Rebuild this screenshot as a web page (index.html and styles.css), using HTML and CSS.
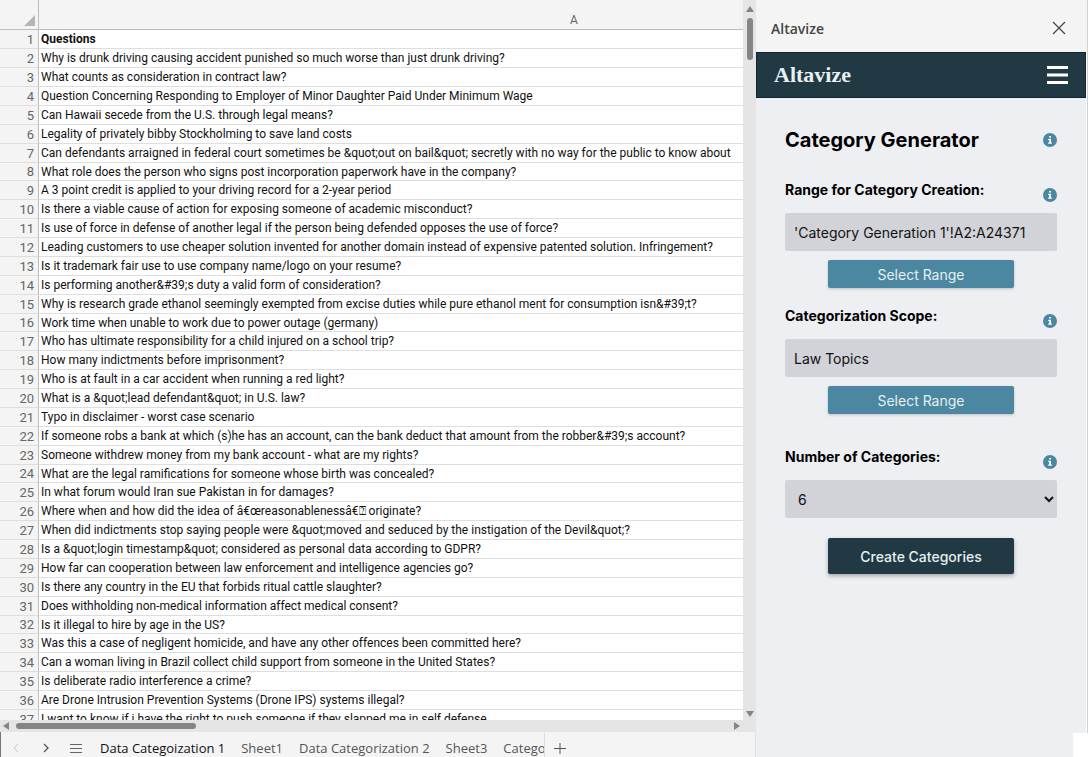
FILE: index.html
```html
<!DOCTYPE html>
<html lang="en">
<head>
  <title>Altavize - Category Generator</title>
  <meta charset="utf-8">
  <link rel="stylesheet" href="styles.css">
</head>
<body>

  <main id="workbook">
    <div id="sheet">
      <div id="grid">
        <table>
          <colgroup><col class="numbers"><col class="questions"></colgroup>
          <thead>
            <tr><th class="corner"><svg width="11" height="11" viewBox="0 0 11 11"><path d="M11 0V11H0Z" fill="#b5b5b5"/></svg></th><th>A</th></tr>
          </thead>
          <tbody>
            <tr><th>1</th><td><strong>Questions</strong></td></tr>
            <tr><th>2</th><td>Why is drunk driving causing accident punished so much worse than just drunk driving?</td></tr>
            <tr><th>3</th><td>What counts as consideration in contract law?</td></tr>
            <tr><th>4</th><td>Question Concerning Responding to Employer of Minor Daughter Paid Under Minimum Wage</td></tr>
            <tr><th>5</th><td>Can Hawaii secede from the U.S. through legal means?</td></tr>
            <tr><th>6</th><td>Legality of privately bibby Stockholming to save land costs</td></tr>
            <tr><th>7</th><td>Can defendants arraigned in federal court sometimes be &amp;quot;out on bail&amp;quot; secretly with no way for the public to know about</td></tr>
            <tr><th>8</th><td>What role does the person who signs post incorporation paperwork have in the company?</td></tr>
            <tr><th>9</th><td>A 3 point credit is applied to your driving record for a 2-year period</td></tr>
            <tr><th>10</th><td>Is there a viable cause of action for exposing someone of academic misconduct?</td></tr>
            <tr><th>11</th><td>Is use of force in defense of another legal if the person being defended opposes the use of force?</td></tr>
            <tr><th>12</th><td>Leading customers to use cheaper solution invented for another domain instead of expensive patented solution. Infringement?</td></tr>
            <tr><th>13</th><td>Is it trademark fair use to use company name/logo on your resume?</td></tr>
            <tr><th>14</th><td>Is performing another&amp;#39;s duty a valid form of consideration?</td></tr>
            <tr><th>15</th><td>Why is research grade ethanol seemingly exempted from excise duties while pure ethanol ment for consumption isn&amp;#39;t?</td></tr>
            <tr><th>16</th><td>Work time when unable to work due to power outage (germany)</td></tr>
            <tr><th>17</th><td>Who has ultimate responsibility for a child injured on a school trip?</td></tr>
            <tr><th>18</th><td>How many indictments before imprisonment?</td></tr>
            <tr><th>19</th><td>Who is at fault in a car accident when running a red light?</td></tr>
            <tr><th>20</th><td>What is a &amp;quot;lead defendant&amp;quot; in U.S. law?</td></tr>
            <tr><th>21</th><td>Typo in disclaimer - worst case scenario</td></tr>
            <tr><th>22</th><td>If someone robs a bank at which (s)he has an account, can the bank deduct that amount from the robber&amp;#39;s account?</td></tr>
            <tr><th>23</th><td>Someone withdrew money from my bank account - what are my rights?</td></tr>
            <tr><th>24</th><td>What are the legal ramifications for someone whose birth was concealed?</td></tr>
            <tr><th>25</th><td>In what forum would Iran sue Pakistan in for damages?</td></tr>
            <tr><th>26</th><td>Where when and how did the idea of â€œreasonablenessâ€⍰ originate?</td></tr>
            <tr><th>27</th><td>When did indictments stop saying people were &amp;quot;moved and seduced by the instigation of the Devil&amp;quot;?</td></tr>
            <tr><th>28</th><td>Is a &amp;quot;login timestamp&amp;quot; considered as personal data according to GDPR?</td></tr>
            <tr><th>29</th><td>How far can cooperation between law enforcement and intelligence agencies go?</td></tr>
            <tr><th>30</th><td>Is there any country in the EU that forbids ritual cattle slaughter?</td></tr>
            <tr><th>31</th><td>Does withholding non-medical information affect medical consent?</td></tr>
            <tr><th>32</th><td>Is it illegal to hire by age in the US?</td></tr>
            <tr><th>33</th><td>Was this a case of negligent homicide, and have any other offences been committed here?</td></tr>
            <tr><th>34</th><td>Can a woman living in Brazil collect child support from someone in the United States?</td></tr>
            <tr><th>35</th><td>Is deliberate radio interference a crime?</td></tr>
            <tr><th>36</th><td>Are Drone Intrusion Prevention Systems (Drone IPS) systems illegal?</td></tr>
            <tr><th>37</th><td>I want to know if i have the right to push someone if they slapped me in self defense</td></tr>
          </tbody>
        </table>
      </div>
      <div class="scroll vertical">
        <svg width="8" height="6" viewBox="0 0 8 6"><path d="M4 0L8 6H0Z"/></svg>
        <span class="thumb"></span>
        <svg width="8" height="6" viewBox="0 0 8 6"><path d="M0 0H8L4 6Z"/></svg>
      </div>
    </div>
    <div class="scroll horizontal">
      <svg width="6" height="8" viewBox="0 0 6 8"><path d="M6 0V8L0 4Z"/></svg>
      <span class="thumb"></span>
      <svg width="6" height="8" viewBox="0 0 6 8"><path d="M0 0L6 4L0 8Z"/></svg>
    </div>

    <nav id="tabs">
      <button class="tool" aria-label="Previous sheet" disabled><svg width="12" height="12" viewBox="0 0 12 12"><path d="M8 2L4 6L8 10" stroke="#c4c4c4"/></svg></button>
      <button class="tool" aria-label="Next sheet"><svg width="12" height="12" viewBox="0 0 12 12"><path d="M4 2L8 6L4 10" stroke="#555" stroke-width="1.3"/></svg></button>
      <button class="tool" aria-label="All sheets"><svg width="12" height="12" viewBox="0 0 12 12"><path d="M0 2.5H12M0 6.5H12M0 10.5H12" stroke="#666"/></svg></button>
      <div class="names">
        <a href="#" class="active">Data Categoization 1</a>
        <a href="#">Sheet1</a>
        <a href="#">Data Categorization 2</a>
        <a href="#">Sheet3</a>
        <a href="#">Category Generation 1</a>
      </div>
      <button class="tool add" aria-label="New sheet"><svg width="12" height="12" viewBox="0 0 12 12"><path d="M6 1V12M0 6.5H12" stroke="#555"/></svg></button>
    </nav>
  </main>

  <aside id="pane">
    <header class="pane-title">
      <span>Altavize</span>
      <button aria-label="Close"><svg width="14" height="14" viewBox="0 0 14 14"><path d="M1 1L13 13M13 1L1 13" fill="none" stroke="#444" stroke-width="1.2"/></svg></button>
    </header>
    <div class="brand">
      <span>Altavize</span>
      <button aria-label="Menu"><svg width="21" height="18" viewBox="0 0 21 18"><path d="M0 1.5H21M0 9H21M0 16.5H21" stroke="#fff" stroke-width="3"/></svg></button>
    </div>

    <form onsubmit="return false">
      <div class="heading">
        <h1>Category Generator</h1>
        <svg class="info" width="14" height="14" viewBox="0 0 14 14"><circle cx="7" cy="7" r="7"/><path d="M6.2 3H8V4.6H6.2ZM5.2 5.7H8V9.5H8.9V10.8H5.2V9.5H6.2V7H5.2Z"/></svg>
      </div>

      <div class="label-row">
        <label for="range">Range for Category Creation:</label>
        <svg class="info" width="14" height="14" viewBox="0 0 14 14"><circle cx="7" cy="7" r="7"/><path d="M6.2 3H8V4.6H6.2ZM5.2 5.7H8V9.5H8.9V10.8H5.2V9.5H6.2V7H5.2Z"/></svg>
      </div>
      <input id="range" type="text" value="'Category Generation 1'!A2:A24371">
      <button class="select-range">Select Range</button>

      <div class="label-row">
        <label for="scope">Categorization Scope:</label>
        <svg class="info" width="14" height="14" viewBox="0 0 14 14"><circle cx="7" cy="7" r="7"/><path d="M6.2 3H8V4.6H6.2ZM5.2 5.7H8V9.5H8.9V10.8H5.2V9.5H6.2V7H5.2Z"/></svg>
      </div>
      <input id="scope" type="text" value="Law Topics">
      <button class="select-range last">Select Range</button>

      <div class="label-row">
        <label for="count">Number of Categories:</label>
        <svg class="info" width="14" height="14" viewBox="0 0 14 14"><circle cx="7" cy="7" r="7"/><path d="M6.2 3H8V4.6H6.2ZM5.2 5.7H8V9.5H8.9V10.8H5.2V9.5H6.2V7H5.2Z"/></svg>
      </div>
      <select id="count">
        <option>4</option>
        <option>5</option>
        <option selected>6</option>
        <option>7</option>
        <option>8</option>
      </select>
      <button class="create">Create Categories</button>
    </form>
    <span class="pane-corner"></span>
  </aside>

</body>
</html>
```
FILE: styles.css
```css
* {
  box-sizing: border-box;
}

body {
  margin: 0;
  height: 100vh;
  display: flex;
  overflow: hidden;
  background: #fff;
  font-family: Inter, "Liberation Sans", sans-serif;
  font-size: 14px;
  color: #000;
}

button {
  border: 0;
  padding: 0;
  background: none;
  font-family: inherit;
  cursor: pointer;
}

svg {
  display: block;
}

/* workbook */

#workbook {
  flex: 1;
  min-width: 0;
  display: flex;
  flex-direction: column;
  background: #f4f4f4;
}

#sheet {
  flex: 1;
  min-height: 0;
  display: flex;
}

#grid {
  flex: 1;
  min-width: 0;
  overflow: hidden;
  background: #fff;
}

table {
  width: 1109px;
  table-layout: fixed;
  border-collapse: separate;
  border-spacing: 0;
  font-family: Roboto, "Liberation Sans", sans-serif;
  font-size: 12px;
  line-height: 17px;
  color: #111;
}

.numbers {
  width: 39px;
}

thead th {
  height: 30px;
  padding: 0;
  vertical-align: bottom;
  background: #f4f4f4;
  border-bottom: 1px solid #bdbdbd;
  font-weight: normal;
  color: #666;
}

thead .corner {
  border-right: 1px solid #bdbdbd;
  padding: 0 3px 3px 0;
}

.corner svg {
  margin-left: auto;
}

tbody th, td {
  height: 19px;
  padding: 1px 2px 0;
  border-bottom: 1px solid #dedede;
  white-space: nowrap;
}

tbody th {
  padding-right: 4px;
  background: #f4f4f4;
  border-right: 1px solid #bdbdbd;
  text-align: right;
  font-size: 13px;
  font-weight: normal;
  color: #666;
}

tbody tr:nth-child(8n) > * {
  height: 18px;
  line-height: 16px;
}

/* scroll bars */

.scroll {
  display: flex;
  align-items: center;
  background: #e5e5e5;
}

.scroll svg {
  fill: #858585;
}

.scroll .thumb {
  border-radius: 3px;
  background: #858585;
}

.vertical {
  width: 13px;
  flex-direction: column;
  padding: 6px 0 3px;
}

.vertical .thumb {
  width: 6px;
  height: 42px;
  margin: 6px 0 auto;
}

.horizontal {
  height: 12px;
  padding: 0 16px 0 3px;
}

.horizontal .thumb {
  width: 180px;
  height: 6px;
  margin: 0 auto 0 7px;
}

/* sheet tabs */

#tabs {
  height: 25px;
  display: flex;
  padding-top: 1px;
  border-left: 1px solid #777;
  border-right: 1px solid #e2e2e2;
  font-family: "Open Sans", "Noto Sans", sans-serif;
  font-size: 13px;
  line-height: 30px;
}

.tool {
  width: 30px;
  height: 30px;
  display: flex;
  align-items: center;
  justify-content: center;
}

.tool path {
  fill: none;
}

.names {
  width: 453px;
  display: flex;
  gap: 16px;
  padding-left: 9px;
  overflow: hidden;
  white-space: nowrap;
}

.names a {
  color: #555;
  text-decoration: none;
}

.names .active {
  font-weight: 500;
  color: #111;
}

.add {
  border-left: 1px solid #ddd;
}

/* task pane */

#pane {
  position: relative;
  width: 332px;
  background: #edeff3;
  border-right: 1px solid #d0d0d0;
  box-shadow: inset -1px 0 #fff;
}

.pane-title {
  height: 52px;
  display: flex;
  align-items: center;
  justify-content: space-between;
  padding: 4px 21px 0 15px;
  background: #f4f4f4;
  font-family: "Open Sans", "Noto Sans", sans-serif;
  font-weight: 600;
  color: #444;
}

.brand {
  height: 46px;
  display: flex;
  align-items: center;
  justify-content: space-between;
  padding: 0 17px;
  margin-right: 1px;
  border: 1px solid #0d2630;
  background: #213943;
  font-family: "Liberation Serif", serif;
  font-size: 22px;
  font-weight: bold;
  color: #e9f0f3;
}

form {
  display: flex;
  flex-direction: column;
  padding: 27px 30px 0 29px;
}

.heading {
  height: 30px;
  display: flex;
  align-items: center;
  justify-content: space-between;
  margin-bottom: 25px;
}

h1 {
  margin: 0;
  font-size: 20px;
  font-weight: 700;
}

.label-row {
  height: 33px;
  display: flex;
  justify-content: space-between;
  line-height: 20px;
  font-weight: 700;
}

.label-row .info {
  margin-top: 8px;
}

.info circle {
  fill: #4b87a0;
}

.info path {
  fill: #fff;
}

input, select {
  width: 100%;
  height: 38px;
  padding: 0 9px;
  border: 0;
  border-radius: 2px;
  background: #d2d3d8;
  font-family: inherit;
  font-size: 14px;
  color: #111;
}

select {
  padding-right: 0;
}

.select-range, .create {
  width: 186px;
  align-self: center;
  border-radius: 2px;
  color: #e4eff4;
}

.select-range {
  height: 28px;
  margin: 9px 0 18px;
  background: #4b87a0;
  box-shadow: 0 1px 3px rgba(0, 0, 0, 0.2);
  font-size: 14px;
}

.last {
  margin-bottom: 33px;
}

.create {
  height: 36px;
  margin-top: 20px;
  background: #213943;
  box-shadow: 0 2px 4px rgba(0, 0, 0, 0.3);
  font-size: 14px;
  font-weight: 500;
}

.pane-corner {
  position: absolute;
  right: -1px;
  bottom: 0;
  width: 15px;
  height: 24px;
  background: #fff;
}
```
